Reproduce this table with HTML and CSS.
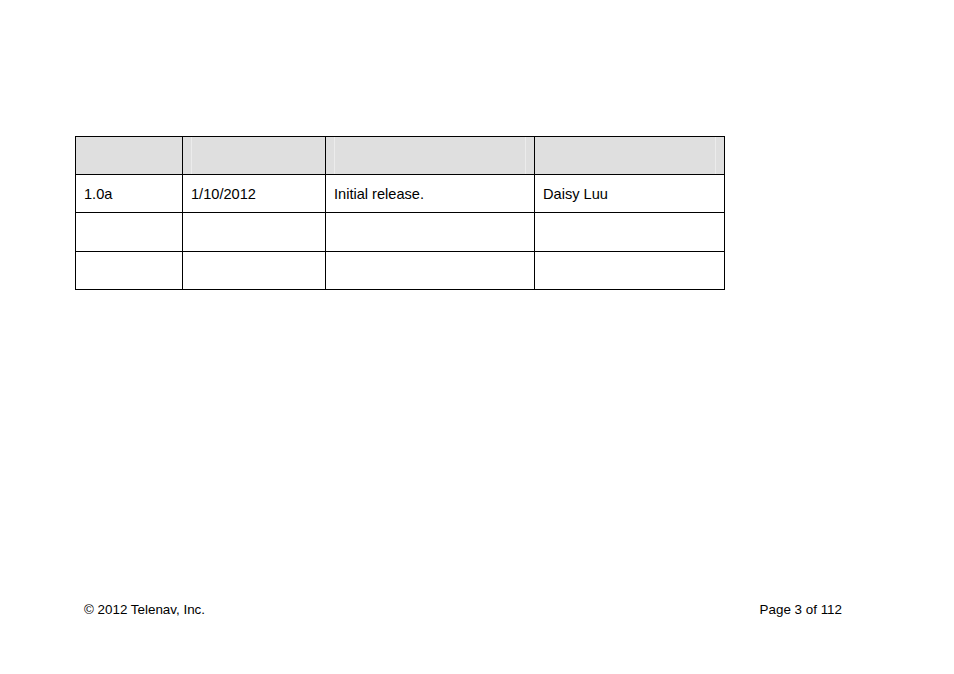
FILE: index.html
```html
<!DOCTYPE html>
<html>
<head>
<meta charset="utf-8">
<link rel="stylesheet" href="styles.css">
</head>
<body>
<div class="page">
  <table class="rev">
    <colgroup>
      <col class="c1"><col class="c2"><col class="c3"><col class="c4">
    </colgroup>
    <tr class="head">
      <th class="h1"></th><th class="h2"></th><th class="h3"></th><th class="h4"></th>
    </tr>
    <tr><td>1.0a</td><td>1/10/2012</td><td>Initial release.</td><td>Daisy Luu</td></tr>
    <tr class="r3"><td></td><td></td><td></td><td></td></tr>
    <tr><td></td><td></td><td></td><td></td></tr>
  </table>
  <div class="spacer"></div>
  <footer class="foot">
    <span>© 2012 Telenav, Inc.</span>
    <span>Page 3 of 112</span>
  </footer>
</div>
</body>
</html>
```
FILE: styles.css
```css
html, body {
  margin: 0;
  padding: 0;
  background: #fff;
}
.page {
  width: 954px;
  height: 674px;
  display: flex;
  flex-direction: column;
  font-family: "Liberation Sans", Arial, sans-serif;
  color: #000;
}
.rev {
  margin: 136px 0 0 75px;
  border-collapse: collapse;
  table-layout: fixed;
  width: 649px;
}
.c1 { width: 107px; }
.c2 { width: 143px; }
.c3 { width: 209px; }
.c4 { width: 190px; }
.rev th, .rev td {
  border: 1px solid #000;
  padding: 0 0 0 8px;
  height: 37px;
  font-size: 14.6px;
  font-weight: normal;
  text-align: left;
  vertical-align: middle;
}
.rev .r3 td { height: 38px; }
.head th { background: #dfdfdf; }
.head .h2 { box-shadow: inset 8px 0 0 #dfdfdf, inset 9px 0 0 #ececec; }
.head .h3 { box-shadow: inset 8px 0 0 #dfdfdf, inset 9px 0 0 #ececec, inset -8px 0 0 #dfdfdf, inset -9px 0 0 #ececec; }
.head .h4 { box-shadow: inset -8px 0 0 #dfdfdf, inset -9px 0 0 #ececec; }
.spacer { flex: 1; }
.foot {
  display: flex;
  justify-content: space-between;
  margin: 0 112px 57px 84px;
  font-size: 13.4px;
}
```
